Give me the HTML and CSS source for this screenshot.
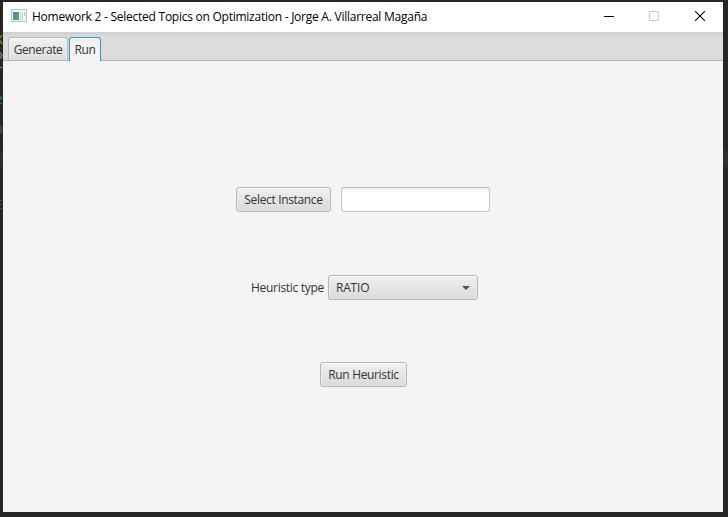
FILE: index.html
```html
<!DOCTYPE html>
<html lang="en">
<head>
<meta charset="utf-8">
<title>Homework 2</title>
<link rel="stylesheet" href="styles.css">
</head>
<body>
<div class="editor" aria-hidden="true">
  <span class="slate">;</span><span class="green">X</span><span class="sand">o</span><span class="sand">r</span><span></span><span class="teal">2</span><span class="slate">;</span><span class="blue">O</span><span class="slate">;</span><span></span><span></span><span></span><span class="blue">E</span>
</div>
<main class="window">
  <header class="titlebar">
    <svg class="app-icon" width="16" height="14" viewBox="0 0 16 14">
      <defs><linearGradient id="pane" x1="0" y1="0" x2="1" y2="1"><stop offset="0" stop-color="#4a7fb5"/><stop offset="1" stop-color="#4fae78"/></linearGradient></defs>
      <path fill="#b9bcc4" d="M0 0h16v13H0z"/>
      <path fill="#f4f5f7" d="M1 1h14v11H1z"/>
      <path fill="url(#pane)" d="M2 3h6v8H2z"/>
      <path fill="#d5e0dc" d="M9 3h3v8H9z"/>
      <path fill="#a9c8ba" d="M13 3h1v4h-1z"/>
    </svg>
    <h1 class="title">Homework 2 - Selected Topics on Optimization - Jorge A. Villarreal Magaña</h1>
    <div class="controls">
      <svg width="10" height="10" viewBox="0 0 10 10"><path fill="#000" d="M0 5h10v1H0z"/></svg>
      <svg width="10" height="10" viewBox="0 0 10 10"><path fill="none" stroke="#ccc" d="M.5.5h9v9h-9z"/></svg>
      <svg class="close" width="10" height="10" viewBox="0 0 10 10"><path fill="none" stroke="#000" stroke-width="1.1" d="M0 0l10 10M10 0L0 10"/></svg>
    </div>
  </header>
  <nav class="tabs">
    <div class="tab tab-generate"><span>Generate</span></div>
    <div class="tab tab-active"><span>Run</span></div>
  </nav>
  <section class="content">
    <div class="row row-instance">
      <button class="button select-button"><span>Select Instance</span></button>
      <input class="field" type="text">
    </div>
    <div class="row row-type">
      <span class="label">Heuristic type</span>
      <div class="button combo"><span>RATIO</span>
        <svg width="8" height="4" viewBox="0 0 8 4"><path fill="#515151" d="M0 0h8L4 4z"/></svg>
      </div>
    </div>
    <button class="button run-button"><span>Run Heuristic</span></button>
  </section>
</main>
</body>
</html>
```
FILE: styles.css
```css
* { box-sizing: border-box; }
body {
  margin: 0;
  width: 728px;
  height: 517px;
  display: flex;
  padding: 2px 0 0;
  overflow: hidden;
  background: linear-gradient(#272626 150px, #2f2f2f 151px, #2f2f2f 166px, #272626 167px);
  font: 12px "Open Sans", "Noto Sans", sans-serif;
  color: #333;
}
.editor {
  width: 3px;
  padding-top: 16px;
  overflow: hidden;
  display: flex;
  flex-direction: column;
  font: 13px/15px "Liberation Mono", monospace;
}
.editor span { height: 15px; margin-left: -5px; }
.slate { color: #41546b; }
.green { color: #62ad22; }
.sand { color: #a0a060; }
.teal { color: #168080; }
.blue { color: #235f99; }
.window {
  width: 720px;
  height: 510px;
  display: flex;
  flex-direction: column;
  background: #f4f4f4;
}
.titlebar {
  height: 30px;
  display: flex;
  align-items: center;
  padding: 0 18px 0 8px;
  background: #fff;
  color: #000;
}
.app-icon { margin-top: -2px; }
.title {
  margin: 0 0 0 5px;
  font-size: 12px;
  font-weight: 400;
  line-height: 16px;
  letter-spacing: -0.25px;
  white-space: nowrap;
}
.controls { display: flex; gap: 35px; margin: -2px 0 0 auto; }
.controls svg { display: block; }
.close { margin-left: 1px; }
.tabs {
  height: 29px;
  display: flex;
  align-items: flex-end;
  gap: 1px;
  padding-left: 5px;
  background: linear-gradient(#cfcfcf, #dcdcdc 5px);
  border-bottom: 1px solid #b3b3b3;
}
.tab {
  height: 23px;
  display: flex;
  justify-content: center;
  align-items: center;
  padding: 2px 0 0;
  border: 1px solid #b5b5b5;
  border-bottom: 0;
  border-radius: 3px 3px 0 0;
  background: linear-gradient(#f1f1f1, #dedede);
  box-shadow: inset 0 1px #fbfbfb, inset 1px 0 #eee, inset -1px 0 #eee;
  line-height: 16px;
  letter-spacing: -0.45px;
  white-space: nowrap;
}
.tab-generate { width: 60px; }
.tab-active {
  width: 32px;
  height: 24px;
  margin-bottom: -1px;
  padding: 1px 0 0;
  border-color: #22a0cc;
  background: linear-gradient(#e9e9e9, #f4f4f4 6px);
}
.content {
  flex: 1;
  display: flex;
  flex-direction: column;
  align-items: flex-start;
  padding-top: 126px;
}
.row { display: flex; align-items: center; height: 25px; }
.row-instance { margin-left: 233px; gap: 10px; }
.row-type { margin: 63px 0 62px 248px; }
.button {
  height: 25px;
  display: flex;
  align-items: center;
  justify-content: center;
  padding: 0;
  border: 1px solid #b5b5b5;
  border-radius: 3px;
  background: linear-gradient(#f0f0f0, #dadada);
  box-shadow: inset 0 1px #fbfbfb, inset 1px 0 #ececec, inset -1px 0 #ececec, inset 0 -1px #e3e3e3;
  color: #333;
  font: inherit;
  line-height: 16px;
  letter-spacing: -0.34px;
  white-space: nowrap;
}
.select-button { width: 95px; }
.field {
  width: 149px;
  height: 25px;
  padding: 0 7px;
  border: 1px solid #c6c6c6;
  border-top-color: #b5b5b5;
  border-radius: 3px;
  background: linear-gradient(#f2f2f2, #fff 5px);
  font: inherit;
}
.label { width: 77px; line-height: 16px; letter-spacing: -0.3px; white-space: nowrap; }
.combo { width: 150px; justify-content: space-between; padding: 0 7px; letter-spacing: -0.2px; }
.run-button { width: 87px; margin-left: 317px; }
```
